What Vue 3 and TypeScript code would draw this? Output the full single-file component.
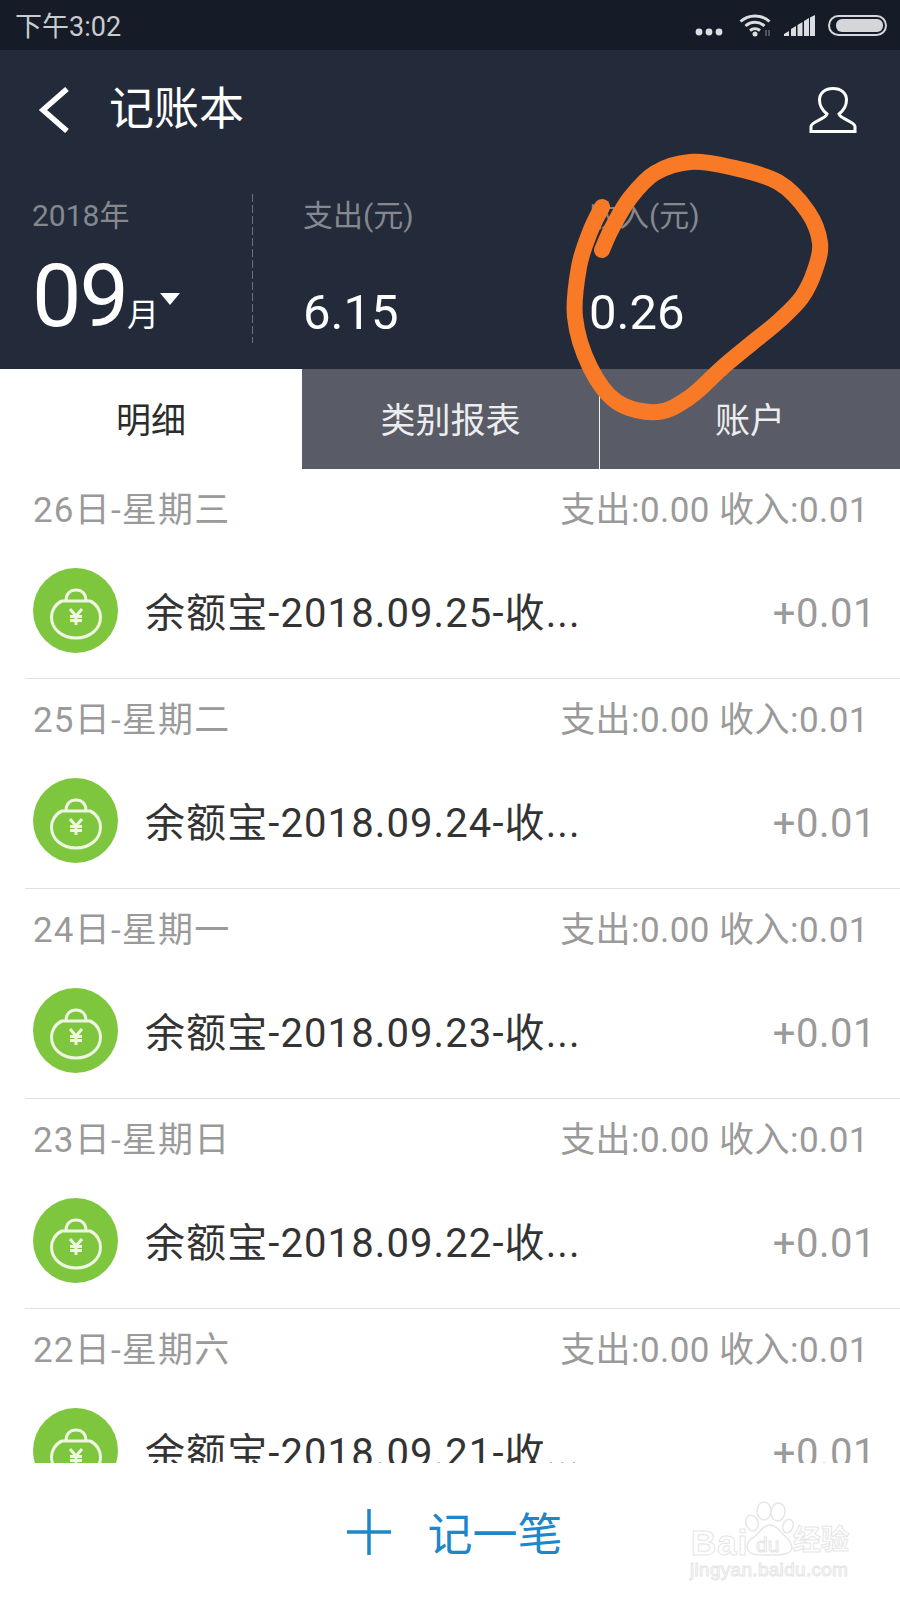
<script setup lang="ts">
interface Group { date: string; title: string }
const groups: Group[] = [
  { date: '26日-星期三', title: '余额宝-2018.09.25-收...' },
  { date: '25日-星期二', title: '余额宝-2018.09.24-收...' },
  { date: '24日-星期一', title: '余额宝-2018.09.23-收...' },
  { date: '23日-星期日', title: '余额宝-2018.09.22-收...' },
  { date: '22日-星期六', title: '余额宝-2018.09.21-收...' },
]
const pts: [number, number][] = [
  [602, 250], [612, 228], [630, 198], [655, 173], [690, 162], [730, 167], [778, 182], [808, 212],
  [820, 243], [815, 270], [802, 297], [780, 320], [752, 343], [723, 367], [690, 397], [657, 412],
  [617, 402], [590, 367], [575, 317], [579, 267], [590, 232], [602, 207],
]
function smooth(p: [number, number][]): string {
  let d = `M${p[0][0]} ${p[0][1]}`
  for (let i = 0; i < p.length - 1; i++) {
    const a = p[Math.max(i - 1, 0)]
    const b = p[i]
    const c = p[i + 1]
    const e = p[Math.min(i + 2, p.length - 1)]
    const c1x = b[0] + (c[0] - a[0]) / 6
    const c1y = b[1] + (c[1] - a[1]) / 6
    const c2x = c[0] - (e[0] - b[0]) / 6
    const c2y = c[1] - (e[1] - b[1]) / 6
    d += ` C${c1x.toFixed(1)} ${c1y.toFixed(1)} ${c2x.toFixed(1)} ${c2y.toFixed(1)} ${c[0]} ${c[1]}`
  }
  return d
}
const scribble = smooth(pts)
</script>

<template>
  <div class="page">
    <div class="status">
      <span class="time">下午3:02</span>
      <div class="status-icons">
        <svg class="dots" width="28" height="8" viewBox="0 0 28 8"><circle cx="4" cy="4" r="3.4" /><circle cx="14" cy="4" r="3.4" /><circle cx="24" cy="4" r="3.4" /></svg>
        <svg class="wifi" width="34" height="24" viewBox="0 0 34 24">
          <path d="M1.500 8.500C9.500 1 22.500 1 30.500 8.500M6.500 13C12 8 20 8 25.500 13M11 17.500C14 15 18 15 21 17.500" />
          <circle cx="16" cy="21" r="2.500" />
          <path class="thin" d="M27 17v6M30 17v6" />
        </svg>
        <svg class="signal" width="31" height="21" viewBox="0 0 31 21"><path d="M0 21v-2l5-3v5zM7 21v-7l5-3v10zM13.500 21V10l5-3v14zM20 21V6l5-3v18zM26 21V2.500l5-2.500v21z" /></svg>
        <div class="battery"><span></span></div>
      </div>
    </div>

    <header class="head">
      <div class="nav">
        <svg class="back" width="34" height="46" viewBox="0 0 34 46"><path d="M29 2 5 23l24 21" /></svg>
        <h1>记账本</h1>
        <svg class="user" width="48" height="46" viewBox="0 0 48 46">
          <path d="M2 44.500v-5c0-5 14-7 16-12.500-5-4-7.500-9-7.500-14C10.500 6 16 1.500 24 1.500S37.500 6 37.500 13c0 5-2.500 10-7.500 14 2 5.500 16 7.500 16 12.500v5z" />
        </svg>
      </div>
      <div class="stats">
        <div class="col month">
          <span class="label">2018年</span>
          <div class="month-val"><b>09</b><i>月</i><em></em></div>
        </div>
        <div class="col spend">
          <span class="label">支出(元)</span>
          <span class="amount">6.15</span>
        </div>
        <div class="col">
          <span class="label">收入(元)</span>
          <span class="amount">0.26</span>
        </div>
      </div>
    </header>

    <nav class="tabs">
      <div class="tab active">明细</div>
      <div class="tab mid">类别报表</div>
      <div class="tab">账户</div>
    </nav>

    <main class="list">
      <section v-for="g in groups" :key="g.date" class="group">
        <div class="day">
          <span class="day-date">{{ g.date }}</span>
          <span>支出:0.00 收入:0.01</span>
        </div>
        <div class="item">
          <svg class="bag" width="85" height="85" viewBox="0 0 85 85">
            <circle class="disc" cx="42.500" cy="42.500" r="42.500" />
            <g class="bag-line">
              <path d="M29 33C22 36 18.500 43 18.500 49 18.500 61 29 70 43 70S67.500 61 67.500 49C67.500 43 64 36 57 33Z" />
              <path d="M33 33C33 26 37 22 43 22S53 26 53 33" />
              <path class="yen" d="M37 41l6 7 6-7M37 48.500H49M37 52.500H49M43 48V57" />
            </g>
          </svg>
          <span class="title">{{ g.title }}</span>
          <span class="value">+0.01</span>
        </div>
      </section>
    </main>

    <footer class="foot">
      <svg width="44" height="46" viewBox="0 0 44 46"><path d="M0 23H44M22 0V46" /></svg>
      <span>记一笔</span>
    </footer>

    <div class="mark" aria-hidden="true">
      <span class="mark-bai">Bai</span>
      <svg class="paw" width="50" height="60" viewBox="0 0 50 60">
        <ellipse cx="7" cy="23" rx="6" ry="8" transform="rotate(-20 7 23)" />
        <ellipse cx="19" cy="11" rx="7" ry="9" />
        <ellipse cx="33" cy="12" rx="7" ry="9" transform="rotate(10 33 12)" />
        <ellipse cx="43" cy="26" rx="5" ry="7" transform="rotate(20 43 26)" />
        <path d="M25 25C17 25 15 33 9 37 2 41 1 47 3 50 5 55 12 55 25 55 40 55 46 54 47 48 47 42 42 38 38 34 34 30 31 25 25 25Z" />
      </svg>
      <span class="mark-du">du</span>
      <span class="mark-cn">经验</span>
      <span class="mark-url">jingyan.baidu.com</span>
    </div>

    <svg class="scribble" width="900" height="1600" viewBox="0 0 900 1600"><path :d="scribble" /></svg>
  </div>
</template>

<style>
html, body { margin: 0; background: #fff; }
</style>

<style scoped>
.page {
  position: relative;
  width: 900px;
  height: 1600px;
  display: flex;
  flex-direction: column;
  overflow: hidden;
  background: #fff;
  font-family: Roboto, "Noto Sans CJK SC", sans-serif;
}
.status {
  height: 50px;
  flex: none;
  display: flex;
  align-items: center;
  justify-content: space-between;
  padding: 0 13px 0 15px;
  background: #151b27;
  color: #c9cbce;
}
.time { font-size: 27px; margin-top: -2px; }
.status-icons { display: flex; align-items: center; gap: 13px; }
.dots { fill: #dcdde0; margin-top: 14px; }
.wifi { margin-left: 3px; }
.wifi path { fill: none; stroke: #dcdde0; stroke-width: 3; }
.wifi circle { fill: #dcdde0; }
.wifi .thin { stroke-width: 1; stroke: #8a8d94; }
.signal { fill: #dcdde0; margin-left: -2px; }
.battery {
  width: 59px;
  height: 21px;
  box-sizing: border-box;
  border: 2px solid #d5d6d9;
  border-radius: 11px;
  padding: 2px;
  display: flex;
}
.battery span { flex: 1; margin-left: 4px; background: #d5d6d9; border-radius: 6px; }

.head { height: 319px; flex: none; background: #232b3a; color: #fff; }
.nav { height: 116px; box-sizing: border-box; padding: 3px 43px 0 38px; display: flex; align-items: center; }
.back path { fill: none; stroke: #fff; stroke-width: 5.500; }
.nav h1 { margin: 0 0 0 37px; flex: 1; font-size: 45px; font-weight: 400; line-height: 113px; }
.user path { fill: none; stroke: #fff; stroke-width: 3; }

.stats { margin-top: 28px; height: 149px; display: grid; grid-template-columns: 253px 336px 1fr; }
.col { display: flex; flex-direction: column; align-items: flex-start; }
.month {
  padding-left: 32px;
  background: linear-gradient(#6b707a 70%, transparent 0) right top / 1px 11px repeat-y;
}
.spend { padding-left: 50px; }
.label { font-size: 30px; line-height: 44px; color: #85888f; }
.amount { margin-top: 49px; font-size: 49px; line-height: 52px; }
.month-val { margin-top: 13px; display: flex; align-items: baseline; height: 90px; }
.month-val b { font-size: 88px; font-weight: 400; line-height: 90px; letter-spacing: -2px; }
.month-val i { font-size: 32px; font-style: normal; }
.month-val em {
  width: 0;
  height: 0;
  align-self: flex-start;
  margin: 42px 0 0 1px;
  border-left: 10px solid transparent;
  border-right: 10px solid transparent;
  border-top: 12px solid #fff;
}

.tabs { height: 100px; flex: none; display: flex; background: #595b67; color: #eceded; font-size: 35px; }
.tab { display: flex; align-items: center; justify-content: center; flex: 1; padding-bottom: 3px; box-sizing: border-box; }
.tab.active { flex: none; width: 302px; background: #fff; color: #2c2c2c; }
.tab.mid { flex: none; width: 298px; border-right: 1px solid #f2f2f2; }

.list { height: 994px; flex: none; overflow: hidden; }
.group { height: 210px; box-sizing: border-box; margin-left: 25px; border-bottom: 1px solid #e0e0e0; padding-right: 34px; }
.day {
  height: 74px;
  margin: 0 -3px 4px 8px;
  display: flex;
  align-items: center;
  justify-content: space-between;
  font-size: 35px;
  letter-spacing: 0.45px;
  color: #9a9a9a;
}
.day-date { letter-spacing: 1.2px; }
.item { height: 131px; margin-left: 8px; display: flex; align-items: flex-start; }
.bag { margin-top: 21px; flex: none; }
.disc { fill: #7fc63f; }
.bag-line path { fill: none; stroke: #eef6e2; stroke-width: 3; }
.title { margin: 38px 0 0 27px; flex: 1; font-size: 40px; line-height: 58px; letter-spacing: 1.1px; color: #333; }
.value { margin: 38px -10px 0 0; font-size: 40px; line-height: 58px; letter-spacing: 0.5px; color: #9a9a9a; }

.foot {
  height: 137px;
  flex: none;
  display: flex;
  align-items: center;
  justify-content: center;
  gap: 36px;
  padding: 0 0 0 10px;
  box-sizing: border-box;
  color: #1c87c9;
  font-size: 45px;
  background: #fff;
}
.foot svg path { fill: none; stroke: #1c87c9; stroke-width: 3.500; }

.mark { position: absolute; left: 670px; top: 1490px; width: 200px; height: 100px; color: #fff; }
.mark span { position: absolute; -webkit-text-stroke: 1px #e6e6e6; font-family: "Liberation Sans", "Noto Sans CJK SC", sans-serif; line-height: 1; white-space: nowrap; }
.mark-bai { left: 21px; top: 35px; font-size: 35px; font-weight: 700; letter-spacing: 1px; }
.mark-du { left: 86px; top: 44px; font-size: 21px; }
.mark-cn { left: 123px; top: 37px; font-size: 28px; font-weight: 700; }
.mark-url { left: 20px; top: 70px; font-size: 19px; letter-spacing: 0.3px; }
.paw { position: absolute; left: 75px; top: 10px; fill: #fff; stroke: #e6e6e6; stroke-width: 1.500; }

.scribble { position: absolute; left: 0; top: 0; pointer-events: none; }
.scribble path { fill: none; stroke: #f97a26; stroke-width: 16; stroke-linecap: round; stroke-linejoin: round; }
</style>
